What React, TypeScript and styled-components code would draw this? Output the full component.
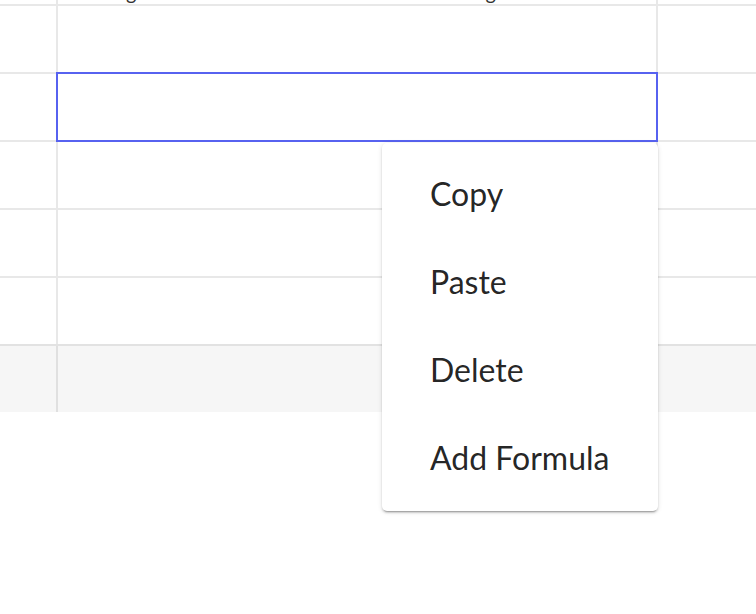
import React from "react";
import styled, { createGlobalStyle } from "styled-components";

const Global = createGlobalStyle`
  html, body { margin: 0; padding: 0; background: #ffffff; }
  body { font-family: Lato, "Open Sans", sans-serif; overflow: hidden; }
`;

const Page = styled.div`
  position: relative;
  width: 756px;
  height: 614px;
  background: #fff;
`;

const Sheet = styled.div`
  display: flex;
  flex-direction: column;
`;

const Row = styled.div<{ $shaded?: boolean }>`
  display: flex;
  height: 66px;
  border-top: 2px solid ${(p) => (p.$shaded ? "#e2e2e2" : "#e8e8e8")};
  background: ${(p) => (p.$shaded ? "#f6f6f6" : "#fff")};
`;

const TopRow = styled.div`
  display: flex;
  height: 4px;
  overflow: hidden;
`;

const IndexCell = styled.div<{ $shaded?: boolean }>`
  width: 56px;
  flex: none;
  border-right: 2px solid ${(p) => (p.$shaded ? "#e0e0e0" : "#e8e8e8")};
`;

const SEL = "#5762f0";

const MainCell = styled.div<{ $selected?: boolean; $shaded?: boolean }>`
  width: 598px;
  flex: none;
  border-right: 2px solid
    ${(p) => (p.$selected ? SEL : p.$shaded ? "#e0e0e0" : "#e8e8e8")};
  box-shadow: ${(p) =>
    p.$selected
      ? `-2px 0 0 0 ${SEL}, 0 -2px 0 0 ${SEL}, 0 2px 0 0 ${SEL}, -2px -2px 0 0 ${SEL}, -2px 2px 0 0 ${SEL}`
      : "none"};
  position: relative;
  z-index: ${(p) => (p.$selected ? 1 : 0)};
  display: flex;
  align-items: flex-end;
`;

const RestCell = styled.div`
  flex: 1;
`;

const Clipped = styled.span<{ $left: number }>`
  font-size: 20px;
  line-height: 20px;
  color: #333;
  margin-left: ${(p) => p.$left}px;
  transform: translateY(-2px);
  display: inline-block;
`;

const Menu = styled.ul`
  position: absolute;
  left: 382px;
  top: 143px;
  width: 276px;
  margin: 0;
  padding: 8px 0;
  list-style: none;
  background: #fff;
  border-radius: 5px;
  box-shadow: 0px 3px 1px -2px rgba(0, 0, 0, 0.2),
    0px 2px 2px 0px rgba(0, 0, 0, 0.14), 0px 1px 5px 0px rgba(0, 0, 0, 0.12);
  z-index: 5;
`;

const MenuItem = styled.li`
  height: 88px;
  box-sizing: border-box;
  padding-bottom: 4px;
  display: flex;
  align-items: center;
  padding-left: 48px;
  font-family: Lato, sans-serif;
  font-size: 32px;
  color: rgba(0, 0, 0, 0.87);
  cursor: pointer;
`;

const rows = [
  { selected: false, shaded: false },
  { selected: true, shaded: false },
  { selected: false, shaded: false },
  { selected: false, shaded: false },
  { selected: false, shaded: false },
  { selected: false, shaded: true },
];

export default function App() {
  return (
    <Page>
      <Global />
      <Sheet>
        <TopRow>
          <IndexCell />
          <MainCell>
            <Clipped $left={68}>g</Clipped>
            <Clipped $left={349}>g</Clipped>
          </MainCell>
          <RestCell />
        </TopRow>
        {rows.map((r, i) => (
          <Row key={i} $shaded={r.shaded}>
            <IndexCell $shaded={r.shaded} />
            <MainCell $selected={r.selected} $shaded={r.shaded} />
            <RestCell />
          </Row>
        ))}
      </Sheet>
      <Menu>
        <MenuItem>Copy</MenuItem>
        <MenuItem>Paste</MenuItem>
        <MenuItem>Delete</MenuItem>
        <MenuItem>Add Formula</MenuItem>
      </Menu>
    </Page>
  );
}
